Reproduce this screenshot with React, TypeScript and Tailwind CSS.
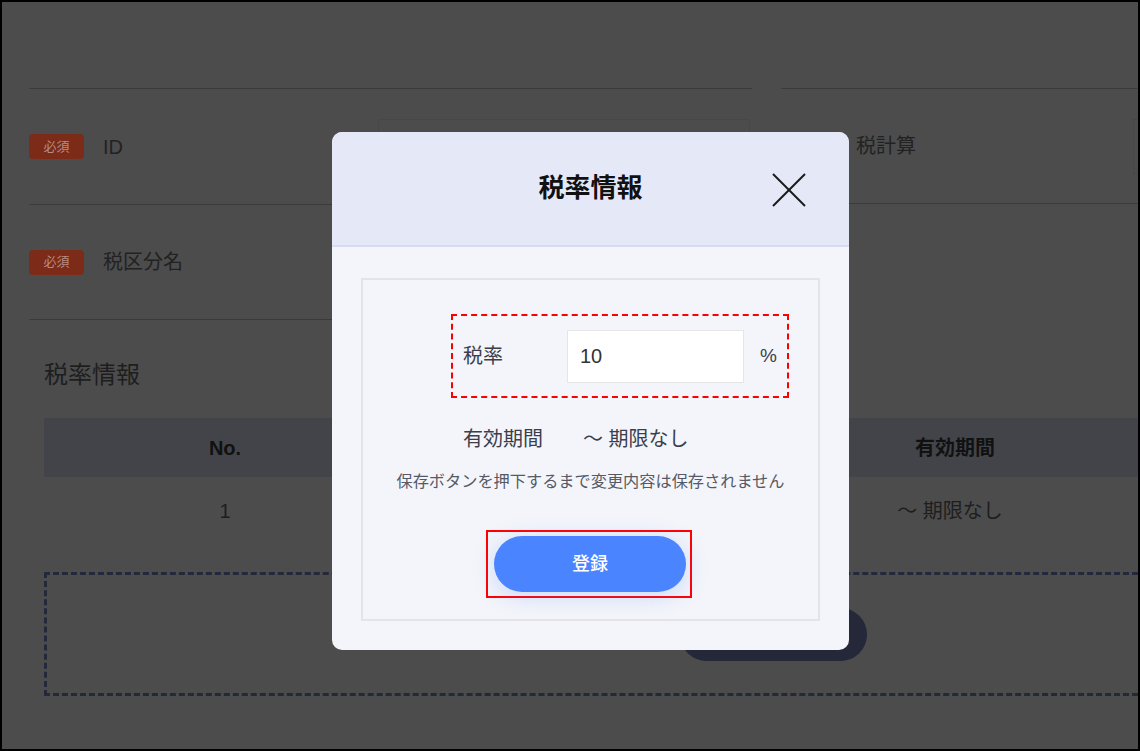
import React from "react";

const font = "font-['Liberation_Sans','Noto_Sans_CJK_JP',sans-serif]";

function Badge() {
  return (
    <span className="flex h-[25px] w-[55px] items-center justify-center rounded-[4px] bg-[#7b2b18] text-[13px] text-[#b98c82]">
      必須
    </span>
  );
}

export default function App() {
  return (
    <div
      className={`relative h-[751px] w-[1140px] overflow-hidden border-2 border-black bg-[#4c4c4c] ${font}`}
    >
      {/* dimmed page */}
      <div className="flex flex-col pt-[86px]">
        <div className="flex">
          {/* left column */}
          <div className="ml-[27px] w-[723px] shrink-0">
            <div className="flex h-[116px] items-center border-t border-[#3b3b3b]">
              <Badge />
              <span className="ml-[19px] text-[20px] text-[#222]">ID</span>
              <div className="ml-auto mr-[2px] h-[55px] w-[372px] border border-[#474747]" />
            </div>
            <div className="flex h-[116px] items-center border-t border-b border-[#3b3b3b]">
              <Badge />
              <span className="ml-[19px] text-[20px] text-[#222]">税区分名</span>
            </div>
          </div>
          {/* right column */}
          <div className="ml-[29px] flex-1">
            <div className="flex h-[116px] items-center border-t border-b border-[#3b3b3b]">
              <Badge />
              <span className="ml-[20px] text-[20px] text-[#222]">税計算</span>
              <div className="ml-auto mr-[-55px] h-[55px] w-[60px] border border-[#474747]" />
            </div>
          </div>
        </div>

        <div className="ml-[42px] mt-[39px] text-[24px] leading-[32px] text-[#1e1e1e]">税率情報</div>

        <div className="ml-[42px] mt-[27px] w-[1096px]">
          <div className="grid h-[59px] grid-cols-[362px_1fr_1fr_370px] items-center bg-[#434449] text-[20px] font-bold text-[#111]">
            <div className="text-center">No.</div>
            <div />
            <div />
            <div className="text-center">有効期間</div>
          </div>
          <div className="grid h-[68px] grid-cols-[362px_1fr_1fr_370px] items-center text-[20px] text-[#1e1e1e]">
            <div className="text-center">1</div>
            <div />
            <div />
            <div className="pr-[10px] text-center">〜 期限なし</div>
          </div>
        </div>

        <div className="ml-[42px] mt-[27px] h-[124px] w-[1130px] border-[3px] border-dashed border-[#23283a] pt-[33px]">
          <div className="ml-[633px] h-[53px] w-[187px] rounded-full bg-[#242838]" />
        </div>
      </div>

      {/* modal */}
      <div className="absolute left-[330px] top-[130px] flex h-[518px] w-[517px] flex-col overflow-hidden rounded-[10px] bg-[#f4f5fa]">
        <div className="relative flex h-[115px] shrink-0 items-center justify-center border-b-2 border-[#d7dbf0] bg-[#e5e8f7]">
          <span className="text-[26px] font-bold text-[#111]">税率情報</span>
          <svg
            className="absolute right-[43px] top-[41px]"
            width="34"
            height="34"
            viewBox="0 0 34 34"
          >
            <line x1="1" y1="1" x2="33" y2="33" stroke="#1a1a1a" strokeWidth="2" />
            <line x1="33" y1="1" x2="1" y2="33" stroke="#1a1a1a" strokeWidth="2" />
          </svg>
        </div>
        <div className="flex-1 px-[29px] pb-[29px] pt-[31px]">
          <div className="flex h-full flex-col border-2 border-[#e3e4e8]">
            <div className="ml-[88px] mt-[34px] flex h-[84px] w-[338px] items-center border-2 border-dashed border-[#ff0000] pl-[10px]">
              <span className="w-[104px] text-[20px] text-[#3a3e4d]">税率</span>
              <div className="flex h-[53px] w-[177px] items-center border border-[#e6e6e6] bg-white pl-[12px] text-[20px] text-[#333]">
                10
              </div>
              <span className="ml-[16px] text-[19px] text-[#3a3e4d]">%</span>
            </div>
            <div className="ml-[100px] mt-[26px] flex h-[30px] items-center text-[20px] text-[#3a3e4d]">
              <span className="w-[120px]">有効期間</span>
              <span>〜 期限なし</span>
            </div>
            <div className="mt-[15px] text-center text-[16.2px] leading-[24px] text-[#555a66]">
              保存ボタンを押下するまで変更内容は保存されません
            </div>
            <div className="ml-[123px] mt-[37px] h-[68px] w-[206px] border-2 border-[#ff0000] px-[6px] pt-[4px]">
              <button className="flex h-[56px] w-[192px] items-center justify-center rounded-full bg-[#4b84ff] text-[18px] font-medium text-white shadow-[0_4px_22px_rgba(75,132,255,0.25)]">
                登録
              </button>
            </div>
          </div>
        </div>
      </div>
    </div>
  );
}
